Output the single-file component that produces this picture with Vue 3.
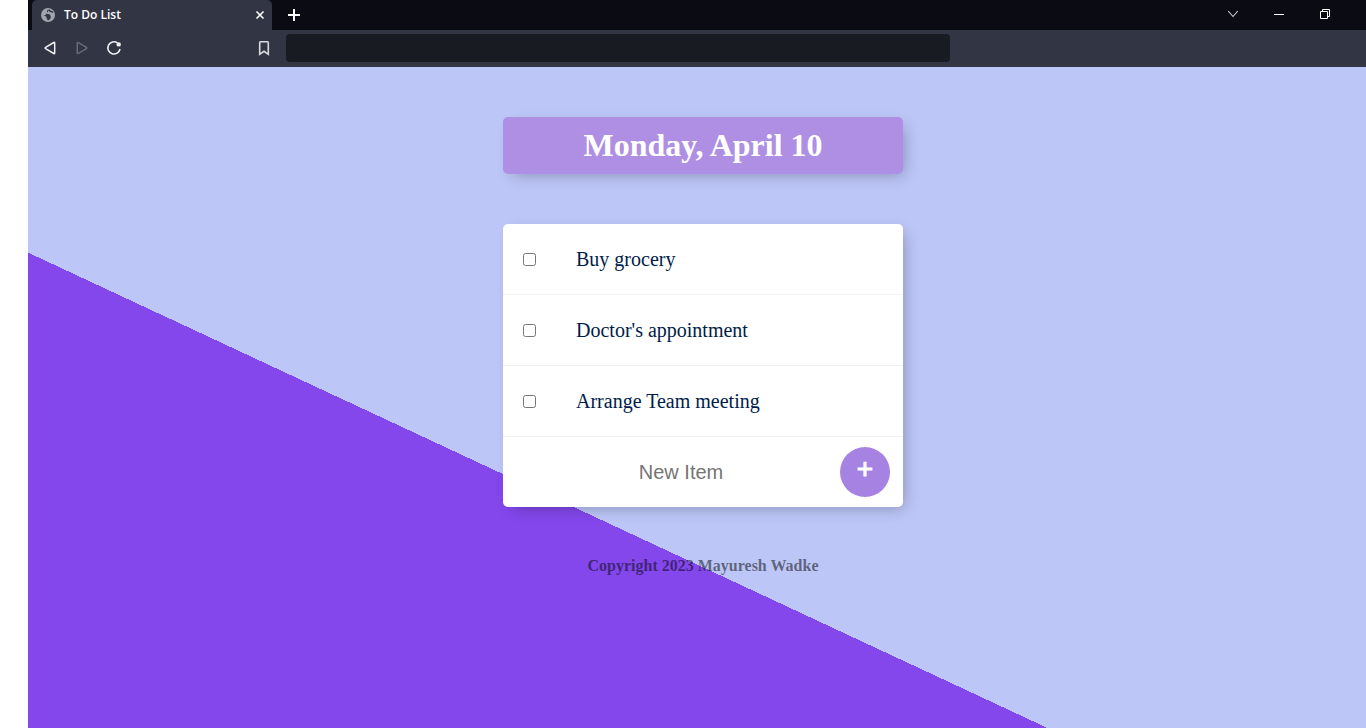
<script setup>
import { ref } from 'vue'

const items = ref([
  { id: 1, text: 'Buy grocery', done: false },
  { id: 2, text: "Doctor's appointment", done: false },
  { id: 3, text: 'Arrange Team meeting', done: false },
])
const draft = ref('')
const address = ref('')

function addItem() {
  const text = draft.value.trim()
  if (!text) return
  items.value.push({ id: Date.now(), text, done: false })
  draft.value = ''
}
</script>

<template>
  <div class="window">
    <header class="tabs">
      <div class="tab">
        <svg width="16" height="16" viewBox="0 0 16 16" aria-hidden="true">
          <circle cx="8" cy="8" r="7" fill="#a2a5ae" />
          <path d="M9.500 2.500Q6.500 3 7 4.500T6.500 7.200Q9.500 7 10.500 9T9.500 12.500L8 13.500Q6.500 12 6.500 10.500T2.500 8.300Q5 8.800 6 7.200" fill="#323543" />
          <path d="M6.800 7.500Q10 7.300 9.800 9.200T7.800 12" fill="none" stroke="#323543" stroke-width="1.200" />
          <path d="M9.200 2.800Q10 5.200 13.200 5" fill="none" stroke="#323543" stroke-width="1.400" />
        </svg>
        <span class="tab-title">To Do List</span>
        <button class="icon" type="button" aria-label="Close tab">
          <svg width="16" height="16" viewBox="0 0 16 16"><path d="m4.500 4.500 7 7m0-7-7 7" stroke="#fff" stroke-width="1.600" /></svg>
        </button>
      </div>
      <button class="icon new-tab" type="button" aria-label="New tab">
        <svg width="16" height="16" viewBox="0 0 16 16"><path d="M8 2v12M2 8h12" stroke="#fff" stroke-width="2" /></svg>
      </button>
      <div class="controls">
        <button class="icon" type="button" aria-label="Search tabs">
          <svg width="16" height="16" viewBox="0 0 16 16"><path d="m3.200 5 4.800 5.500L12.800 5" fill="none" stroke="#d4d4d8" stroke-width="1.100" /></svg>
        </button>
        <button class="icon" type="button" aria-label="Minimize">
          <svg width="16" height="16" viewBox="0 0 16 16"><path d="M3 8.500h10" stroke="#fff" /></svg>
        </button>
        <button class="icon" type="button" aria-label="Restore">
          <svg width="16" height="16" viewBox="0 0 16 16"><path d="M3.500 5.500h7v7h-7zM5.500 5.500v-2h7v7h-2" fill="none" stroke="#fff" /></svg>
        </button>
      </div>
    </header>

    <nav class="toolbar">
      <button class="icon" type="button" aria-label="Back">
        <svg width="16" height="16" viewBox="0 0 16 16"><path d="M12.700 3v10q0 1-.9.500L3.600 8.600q-.9-.6 0-1.200l8.200-4.900q.9-.5.9.500z" fill="none" stroke="#f0f0f2" stroke-width="1.500" /></svg>
      </button>
      <button class="icon" type="button" aria-label="Forward" disabled>
        <svg width="16" height="16" viewBox="0 0 16 16"><path d="M3.300 3v10q0 1 .9.500l8.200-4.900q.9-.6 0-1.200L4.200 2.500q-.9-.5-.9.500z" fill="none" stroke="#6b6e7c" stroke-width="1.400" /></svg>
      </button>
      <button class="icon" type="button" aria-label="Reload">
        <svg width="16" height="16" viewBox="0 0 16 16"><path d="M11.500 2.900A6.100 6.100 0 1 0 14 9" fill="none" stroke="#f0f0f2" stroke-width="1.600" /><circle cx="12.700" cy="4.400" r="2.200" fill="#f0f0f2" /></svg>
      </button>
      <button class="icon bookmark" type="button" aria-label="Bookmark">
        <svg width="16" height="16" viewBox="0 0 16 16"><path d="M3.700 2.700q0-.9.900-.9h6.800q.9 0 .9.900v11.600L8 11.300l-4.300 3z" fill="none" stroke="#dcdce0" stroke-width="1.600" /></svg>
      </button>
      <input v-model="address" class="address" type="text" aria-label="Address">
    </nav>

    <main class="page">
      <h1 class="box heading">Monday, April 10</h1>

      <div class="box list">
        <label v-for="item in items" :key="item.id" class="item">
          <input v-model="item.done" type="checkbox">
          <span>{{ item.text }}</span>
        </label>
        <form class="entry" @submit.prevent="addItem">
          <input v-model="draft" type="text" placeholder="New Item" aria-label="New Item" autocomplete="off">
          <button type="submit" aria-label="Add item">+</button>
        </form>
      </div>

      <footer>Copyright 2023 Mayuresh Wadke</footer>
    </main>
  </div>
</template>

<style>
body {
  margin: 0;
  background: #fff;
}
</style>

<style scoped>
.window {
  display: flex;
  flex-direction: column;
  min-height: 100vh;
  margin-left: 28px;
}

.icon {
  display: block;
  width: 16px;
  height: 16px;
  padding: 0;
  border: 0;
  background: none;
}

.icon svg,
.tab svg {
  display: block;
}

.tabs {
  display: flex;
  align-items: center;
  height: 30px;
  padding-left: 4px;
  background: #0b0b14;
}

.tab {
  box-sizing: border-box;
  display: flex;
  align-items: center;
  gap: 8px;
  width: 240px;
  height: 30px;
  padding: 0 4px 0 8px;
  border-radius: 5px 5px 0 0;
  background: #323543;
}

.tab-title {
  flex: 1;
  padding-bottom: 1px;
  color: #fff;
  font: 600 12px "Open Sans", sans-serif;
}

.new-tab {
  margin-left: 14px;
}

.controls {
  display: flex;
  gap: 30px;
  margin-left: auto;
  padding: 0 33px 2px 0;
}

.toolbar {
  box-sizing: border-box;
  display: flex;
  align-items: center;
  gap: 16px;
  height: 37px;
  padding: 0 0 1px 14px;
  background: #323543;
}

.bookmark {
  margin-left: 118px;
}

.address {
  box-sizing: border-box;
  width: 60%;
  max-width: 664px;
  height: 28px;
  margin-left: -2px;
  padding: 0 12px;
  border: 0;
  border-radius: 4px;
  background: #181b22;
  color: #fff;
  font: 14px "Open Sans", sans-serif;
}

.page {
  flex: 1;
  display: flex;
  flex-direction: column;
  align-items: center;
  gap: 50px;
  padding: 50px 0 50px 12px;
  background: linear-gradient(25deg, #8347eb 37%, #bcc6f7 37%);
  font-family: "Liberation Serif", serif;
}

.box {
  width: 400px;
  max-width: 100%;
  border-radius: 5px;
  box-shadow: 5px 5px 15px -5px rgba(0, 0, 0, 0.3);
}

.heading {
  box-sizing: border-box;
  margin: 0;
  padding: 10px;
  background: #ae8fe3;
  color: #fff;
  font-size: 32px;
  line-height: 37px;
  text-align: center;
}

.list {
  background: #fff;
}

.item {
  display: flex;
  align-items: center;
  height: 70px;
  border-bottom: 1px solid #f1f1f1;
  color: #001c4a;
  font-size: 20px;
}

.item input {
  width: 13px;
  height: 13px;
  margin: 0 40px 0 20px;
}

.item input:checked + span {
  text-decoration: line-through;
}

.entry {
  display: flex;
  align-items: center;
  height: 70px;
  padding: 0 13px 0 19px;
}

.entry input {
  flex: 1;
  min-width: 0;
  height: 60px;
  padding: 0;
  border: 0;
  outline: 0;
  background: transparent;
  font: 20px "Liberation Sans", sans-serif;
  text-align: center;
}

.entry input::placeholder {
  color: #757575;
}

.entry button {
  width: 50px;
  height: 50px;
  padding: 0 0 6px;
  border: 0;
  border-radius: 50%;
  background: #a683e3;
  color: #fff;
  font: 28px "Liberation Sans", sans-serif;
  -webkit-text-stroke: 1px #fff;
}

footer {
  color: rgba(0, 0, 0, 0.5);
  font-size: 16px;
  font-weight: bold;
}
</style>
